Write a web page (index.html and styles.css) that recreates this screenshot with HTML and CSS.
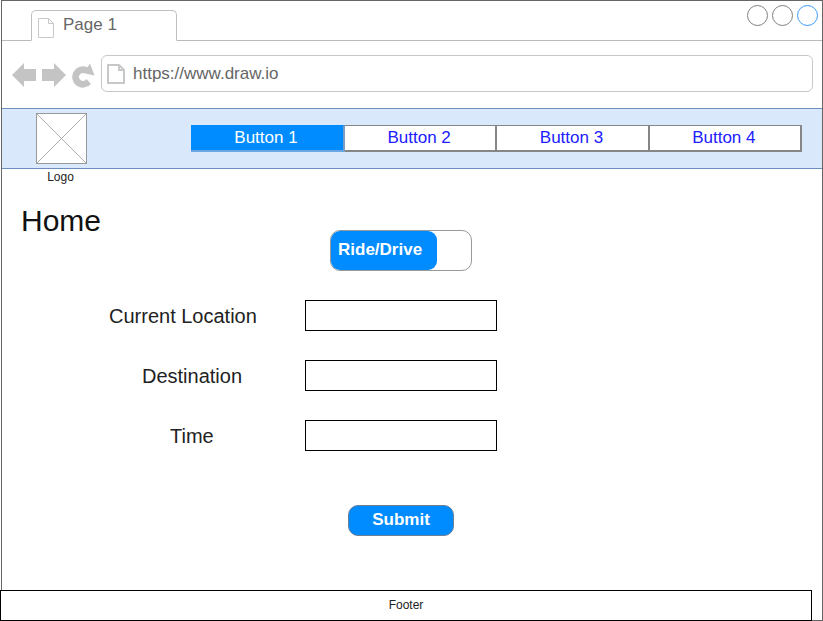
FILE: index.html
```html
<!DOCTYPE html>
<html lang="en">

<head>
    <meta charset="UTF-8">
    <title>Home</title>
    <link rel="stylesheet" href="styles.css">
</head>

<body>
    <div class="window">
        <div class="tab-bar">
            <div class="tab">
                <svg class="page-icon" width="18" height="20" viewBox="0 0 18 20">
                    <path d="M1.5 .5H11.500L16.500 5.500V19.500H1.500Z M11.500 .5V5.500H16.500" fill="#fff" stroke="#c8c8c8" />
                </svg>
                <span>Page 1</span>
            </div>
            <div class="window-dots">
                <span class="dot"></span>
                <span class="dot"></span>
                <span class="dot dot-active"></span>
            </div>
        </div>

        <div class="address-row">
            <div class="browser-buttons">
                <svg width="24" height="24" viewBox="0 0 24 24">
                    <path d="M0 12L12 0V6H24V18H12V24Z" fill="#c4c4c4" />
                </svg>
                <svg width="24" height="24" viewBox="0 0 24 24">
                    <path d="M24 12L12 0V6H0V18H12V24Z" fill="#c4c4c4" />
                </svg>
                <svg width="23" height="25" viewBox="0 0 23 25">
                    <path d="M19 21A10.700 10.700 0 1 1 15.500 4.300L18 .5L22.500 12.500L11 10A4 4 0 1 0 14.500 16Z" fill="#c4c4c4" />
                </svg>
            </div>
            <div class="address-bar">
                <svg width="18" height="20" viewBox="0 0 18 20">
                    <path d="M1 1H12L17 6V19H1Z M12 1V6H17" fill="#fff" stroke="#c8c8c8" stroke-width="2" />
                </svg>
                <span>https://www.draw.io</span>
            </div>
        </div>

        <div class="nav-band">
            <div class="logo">
                <svg class="logo-box" width="51" height="51" viewBox="0 0 51 51">
                    <rect x=".5" y=".5" width="50" height="50" fill="#fff" stroke="#999" />
                    <path d="M0 0L51 51M51 0L0 51" stroke="#999" stroke-width=".8" />
                </svg>
                <div class="logo-text">Logo</div>
            </div>
            <div class="nav-buttons">
                <a class="nav-btn active">Button 1</a>
                <a class="nav-btn">Button 2</a>
                <a class="nav-btn">Button 3</a>
                <a class="nav-btn">Button 4</a>
            </div>
        </div>

        <div class="content">
            <div class="page-head">
                <h1>Home</h1>
                <div class="toggle">
                    <div class="toggle-on">Ride/Drive</div>
                </div>
            </div>

            <div class="form-row">
                <label class="label-location">Current Location</label>
                <div class="text-box"></div>
            </div>
            <div class="form-row">
                <label class="label-destination">Destination</label>
                <div class="text-box"></div>
            </div>
            <div class="form-row">
                <label class="label-time">Time</label>
                <div class="text-box"></div>
            </div>

            <button class="submit">Submit</button>
        </div>

        <div class="footer">Footer</div>
    </div>
</body>
</html>
```

FILE: styles.css
```css
* {
box-sizing: border-box;
}

body {
margin: 0;
font-family: "Liberation Sans", Arial, sans-serif;
background: #fff;
}

/* Browser frame */
.window {
width: 822px;
height: 621px;
margin-left: 1px;
border: 1px solid #666;
display: flex;
flex-direction: column;
}

.tab-bar {
height: 40px;
flex: none;
padding: 9px 4px 0 29px;
border-bottom: 1px solid #bbb;
display: flex;
justify-content: space-between;
align-items: flex-start;
}

.tab {
width: 146px;
height: 31px;
padding: 6px 0 0 5px;
border: 1px solid #c0c0c0;
border-bottom: 1px solid #fff;
border-radius: 5px 5px 0 0;
background: #fff;
display: flex;
align-items: flex-start;
gap: 8px;
color: #666;
font-size: 17px;
line-height: 16px;
}

.page-icon {
margin-top: 1px;
}

.window-dots {
margin-top: -5px;
display: flex;
gap: 4px;
}

.dot {
width: 21px;
height: 21px;
border: 1px solid #808080;
border-radius: 50%;
}

.dot-active {
border-color: #3d9bff;
}

.address-row {
height: 67px;
flex: none;
padding: 14px 9px 0 10px;
display: flex;
align-items: flex-start;
gap: 6px;
}

.browser-buttons {
margin-top: 8px;
display: flex;
gap: 6px;
}

.address-bar {
flex: 1;
height: 37px;
padding-left: 5px;
border: 1px solid #c8c8c8;
border-radius: 6px;
display: flex;
align-items: center;
gap: 8px;
color: #666;
font-size: 17px;
}

/* Navigation band */
.nav-band {
height: 61px;
flex: none;
padding-left: 34px;
background: #dae8fc;
border-top: 1px solid #6c8ebf;
border-bottom: 1px solid #6c8ebf;
display: flex;
align-items: flex-start;
}

.logo {
width: 51px;
margin-top: 4px;
}

.logo-box {
display: block;
}

.logo-text {
width: 49px;
margin-top: 6px;
text-align: center;
font-size: 12px;
line-height: 14px;
white-space: nowrap;
color: #222;
}

.nav-buttons {
width: 611px;
height: 27px;
margin: 16px 0 0 104px;
display: flex;
background: #fff;
}

.nav-btn {
flex: 1;
padding-right: 2px;
border: 1px solid #868686;
border-left: 0;
border-width: 1px 2px 2px 0;
color: #2020ff;
font-size: 17px;
line-height: 23px;
text-align: center;
}

.nav-btn.active {
flex: none;
width: 154px;
background: #008cff;
border-color: #008cff #7c9cc0 #6aa6e0 #008cff;
color: #fff;
}

/* Page content */
.content {
flex: 1;
padding: 35px 0 0 20px;
}

.page-head {
display: flex;
align-items: flex-start;
}

h1 {
width: 308px;
margin: 0;
font-size: 30px;
font-weight: normal;
line-height: 34px;
color: #111;
text-indent: -1px;
}

.toggle {
width: 142px;
height: 41px;
margin-top: 26px;
border: 1px solid #999;
border-radius: 10px;
background: #fff;
}

.toggle-on {
width: 106px;
height: 39px;
padding-left: 7px;
border-radius: 9px;
background: #008cff;
color: #fff;
font-size: 17px;
font-weight: bold;
line-height: 37px;
white-space: nowrap;
}

.form-row {
height: 31px;
margin-bottom: 29px;
display: flex;
align-items: center;
}

.page-head + .form-row {
margin-top: 29px;
}

.form-row label {
width: 283px;
padding-top: 2px;
font-size: 20px;
color: #222;
}

.label-location {
padding-left: 87px;
}

.label-destination {
padding-left: 120px;
}

.label-time {
padding-left: 148px;
}

.text-box {
width: 192px;
height: 31px;
border: 1px solid #000;
background: #fff;
}

.submit {
display: block;
width: 106px;
height: 31px;
margin: 54px 0 0 326px;
padding: 0 0 2px;
border: 1px solid #6d7f95;
border-radius: 10px;
background: #008cff;
color: #fff;
font-family: inherit;
font-size: 17px;
font-weight: bold;
}

.footer {
width: 812px;
height: 31px;
flex: none;
margin: 0 0 -1px -2px;
border: 1px solid #000;
background: #fff;
font-size: 12px;
line-height: 29px;
text-align: center;
color: #222;
}
```
